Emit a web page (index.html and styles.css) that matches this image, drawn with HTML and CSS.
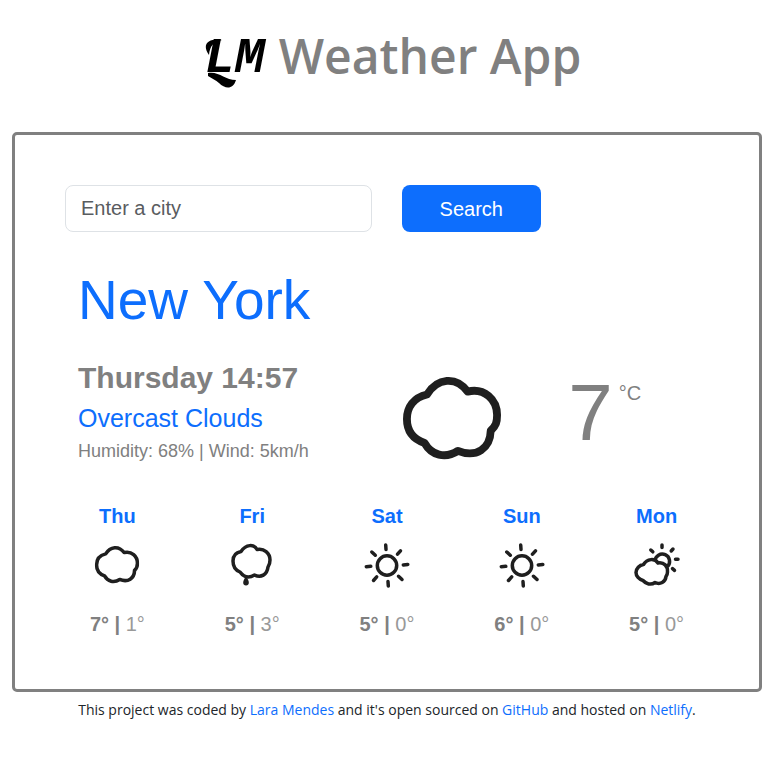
FILE: index.html
```html
<!DOCTYPE html>
<html lang="en">
<head>
<meta charset="utf-8">
<meta name="viewport" content="width=device-width, initial-scale=1">
<title>Weather App</title>
<link rel="stylesheet" href="styles.css">
</head>
<body>
<svg class="symbols" aria-hidden="true">
  <symbol id="cloud" viewBox="0 0 100 100">
    <path d="M24.500 25C35 8 54 6 66 22C83 18 96 30 96 46C96 53 95 57 89.500 62C89 80 75 90 56 82.500C43 91 29 87 22 74.500C9 70 4 61 4 50C4 38 11 28 24.500 25Z"/>
  </symbol>
  <symbol id="rain" viewBox="0 0 48 48">
    <path d="M13 10.500C18 3 26 3 29 8.500C36 7 42 12 42 19C42 22 41.500 24 40 26C39 34 33 37 26.500 34C20 38 15 35 12 31C7 29 5 25 5 20C5 15 8 11.500 13 10.500Z"/>
    <path class="solid" d="M18 35.500C14 40.500 14.500 44.500 18 44.500C21.500 44.500 22 40.500 18 35.500Z"/>
  </symbol>
  <symbol id="sun" viewBox="0 0 48 48">
    <circle cx="24" cy="24.500" r="9.700"/>
    <path class="rays" d="M22.700 4l.3 4.500M37.500 9.800l-3 3.400M44.800 23.500l-4.500.4M39 38.500l-3.500-3.200M25.300 45l-.3-4.500M10.500 39.500l3.200-3.600M3.300 25.700l4.500-.4M8.800 11l3.500 3.200"/>
  </symbol>
  <symbol id="partly" viewBox="0 0 48 48">
    <path d="M22 20A7.300 7.300 0 1 1 34.500 25.500"/>
    <path d="M10.500 23.500C14 17.500 22 17 25 22C31 21 35 25 34.500 31C34.500 33 34 34 33 35.500C32.500 41 27 44 22 41.500C18 44.500 13 43 10 39.500C6 38.500 3 35 3 31.500C3 27.500 6.500 24 10.500 23.500Z"/>
    <path class="rays" d="M29 4v2.500M40 8l-1.800 2M45 18.200h-2.500M41.500 29.300l-2-1.700M17.800 9l2 1.800"/>
  </symbol>
</svg>

<header class="masthead">
  <span class="logo">LM<svg class="swash" viewBox="0 0 60 54" aria-hidden="true"><path d="M4 17C-4 6 4 0 17 2C8 4 5 8 4 17Z"/><path d="M3 35C14 33 20 42 31 42C28 52 20 51 14 45C11 42 6 40 3 38Z"/></svg></span>
  <h1 class="title">Weather App</h1>
</header>

<main class="card">
  <form class="search">
    <input class="search-input" type="search" placeholder="Enter a city" aria-label="City">
    <button class="search-button" type="button">Search</button>
  </form>

  <h2 class="city">New York</h2>

  <section class="current">
    <div class="details">
      <p class="date">Thursday 14:57</p>
      <p class="description">Overcast Clouds</p>
      <p class="extras">Humidity: 68% | Wind: 5km/h</p>
    </div>
    <svg class="icon icon-large" role="img" aria-label="Overcast clouds"><use href="#cloud"/></svg>
    <p class="temperature"><span class="degrees">7</span><span class="unit">°C</span></p>
  </section>

  <section class="forecast">
    <div class="day"><h3 class="day-name">Thu</h3><svg class="icon icon-cloud" viewBox="-4 -4 108 108"><use href="#cloud" width="100" height="100"/></svg><p class="range"><strong>7° |</strong> <span class="low">1°</span></p></div>
    <div class="day"><h3 class="day-name">Fri</h3><svg class="icon"><use href="#rain"/></svg><p class="range"><strong>5° |</strong> <span class="low">3°</span></p></div>
    <div class="day"><h3 class="day-name">Sat</h3><svg class="icon"><use href="#sun"/></svg><p class="range"><strong>5° |</strong> <span class="low">0°</span></p></div>
    <div class="day"><h3 class="day-name">Sun</h3><svg class="icon"><use href="#sun"/></svg><p class="range"><strong>6° |</strong> <span class="low">0°</span></p></div>
    <div class="day"><h3 class="day-name">Mon</h3><svg class="icon"><use href="#partly"/></svg><p class="range"><strong>5° |</strong> <span class="low">0°</span></p></div>
  </section>
</main>

<footer class="credits">This project was coded by <a href="#">Lara Mendes</a> and it's open sourced on <a href="#">GitHub</a> and hosted on <a href="#">Netlify</a>.</footer>
</body>
</html>
```
FILE: styles.css
```css
* {
  box-sizing: border-box;
}

body {
  margin: 0;
  padding: 22px 7px 24px 12px;
  background: #fff;
  color: #808080;
  font-family: "Liberation Sans", Arial, sans-serif;
}

h1, h2, h3, p {
  margin: 0;
}

.symbols {
  position: absolute;
  width: 0;
  height: 0;
}

.masthead {
  display: flex;
  justify-content: center;
  align-items: center;
  gap: 14px;
  height: 68px;
  margin-bottom: 42px;
  padding-left: 12px;
}

.logo {
  position: relative;
  padding-top: 6px;
  color: #000;
  font: italic bold 50px/64px "Liberation Mono", monospace;
}

.swash {
  position: absolute;
  top: 17px;
  left: 0;
  width: 60px;
  height: 54px;
}

.title {
  font-family: "Open Sans", "Noto Sans", sans-serif;
  font-size: 48px;
  line-height: 64px;
  font-weight: 600;
}

.card {
  padding: 50px;
  border: 3px solid #808080;
  border-radius: 5px;
}

.search {
  display: grid;
  grid-template-columns: repeat(4, 1fr);
  gap: 30px;
}

.search-input,
.search-button {
  height: 47px;
  margin: 0;
  border-radius: 8px;
  font: 20px/30px "Liberation Sans", Arial, sans-serif;
}

.search-input {
  grid-column: span 2;
  min-width: 0;
  padding: 7px 15px;
  border: 1px solid #dee2e6;
  background: #fff;
  color: #212529;
  appearance: none;
}

.search-input::placeholder {
  color: #595c5f;
  opacity: 1;
}

.search-button {
  border: 0;
  background: #0d6efd;
  color: #fff;
}

.city {
  margin-top: 34px;
  padding-left: 13px;
  color: #0d6efd;
  font-size: 55px;
  line-height: 68px;
  font-weight: 400;
}

.current {
  display: grid;
  grid-template-columns: repeat(4, 1fr);
  align-items: start;
  column-gap: 27px;
  margin-top: 24px;
}

.details {
  grid-column: span 2;
  padding-left: 13px;
}

.date {
  font-size: 30px;
  line-height: 40px;
  font-weight: 700;
}

.description {
  color: #0d6efd;
  font-size: 25px;
  line-height: 40px;
}

.extras {
  font-size: 18px;
  line-height: 26px;
}

.icon {
  display: block;
  width: 48px;
  height: 48px;
  fill: none;
  stroke: #1f1f1f;
  stroke-width: 3.5;
  stroke-linejoin: round;
}

.icon-large {
  width: 98px;
  height: 98px;
  margin-top: 12px;
  margin-left: 2px;
  stroke-width: 8;
}

.icon-cloud {
  stroke-width: 8;
}

.solid {
  fill: #1f1f1f;
  stroke: none;
}

.rays {
  stroke-linecap: round;
}

.temperature {
  display: flex;
  gap: 6px;
}

.degrees {
  font-size: 80px;
  line-height: 110px;
}

.unit {
  padding-top: 20px;
  font-size: 20px;
  line-height: 30px;
}

.forecast {
  display: grid;
  grid-template-columns: repeat(5, 1fr);
  margin: 33px -15px 0;
}

.day {
  display: flex;
  flex-direction: column;
  align-items: center;
}

.day-name {
  color: #0d6efd;
  font-size: 20px;
  line-height: 30px;
}

.day .icon {
  margin: 10px 0 20px;
}

.range {
  font-size: 20px;
  line-height: 30px;
}

.low {
  opacity: 0.8;
}

.credits {
  margin-top: 6px;
  color: #212529;
  font: 400 14px/24px "Open Sans", "Noto Sans", sans-serif;
  text-align: center;
}

.credits a {
  color: #0d6efd;
  text-decoration: none;
}
```
